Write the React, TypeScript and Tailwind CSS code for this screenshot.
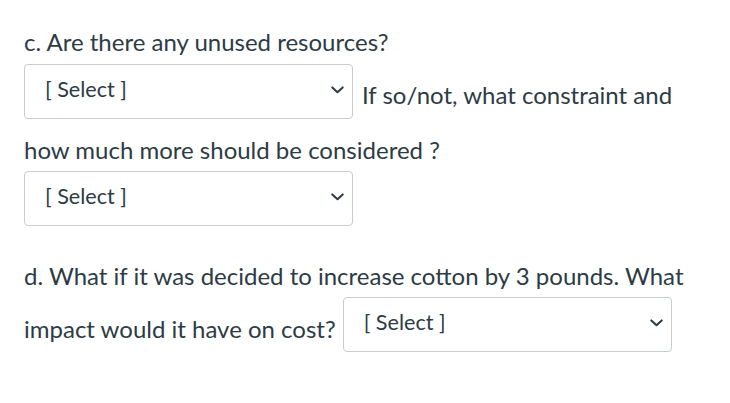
import React from "react";

const SelectBox = () => {
  return (
    <div className="flex h-[55px] w-[329px] shrink-0 items-start justify-between rounded-[4px] border border-[#c7cdd1] bg-white pl-[20px] pr-[8px] pt-[8px]">
      <span className="text-[21.6px] leading-[32px] text-[#2d3b45]">[ Select ]</span>
      <svg
        width="13"
        height="8"
        viewBox="0 0 13 8"
        className="mt-[13px]"
        fill="none"
      >
        <path
          d="M1.3 1.4 L6.5 6.3 L11.7 1.4"
          stroke="#2d3b45"
          strokeWidth="2"
          strokeLinecap="round"
          strokeLinejoin="round"
        />
      </svg>
    </div>
  );
};

export default function App() {
  return (
    <div
      className="min-h-screen bg-white pl-[24px] pt-[24px] text-[24px] leading-[36px] text-[#2d3b45]"
      style={{ fontFamily: "Lato, 'Noto Sans', sans-serif" }}
    >
      <div className="whitespace-nowrap">c. Are there any unused resources?</div>

      <div className="mt-[4px] flex items-start gap-[9px]">
        <SelectBox />
        <span className="mt-[13px] whitespace-nowrap">If so/not, what constraint and</span>
      </div>

      <div className="mt-[13px] whitespace-nowrap">
        how much more should be considered ?
      </div>

      <div className="mt-[3px]">
        <SelectBox />
      </div>

      <div className="mt-[32px] whitespace-nowrap">
        d. What if it was decided to increase cotton by 3 pounds. What
      </div>

      <div className="mt-[3px] flex items-start gap-[7px]">
        <span className="mt-[14px] whitespace-nowrap">impact would it have on cost?</span>
        <SelectBox />
      </div>
    </div>
  );
}
